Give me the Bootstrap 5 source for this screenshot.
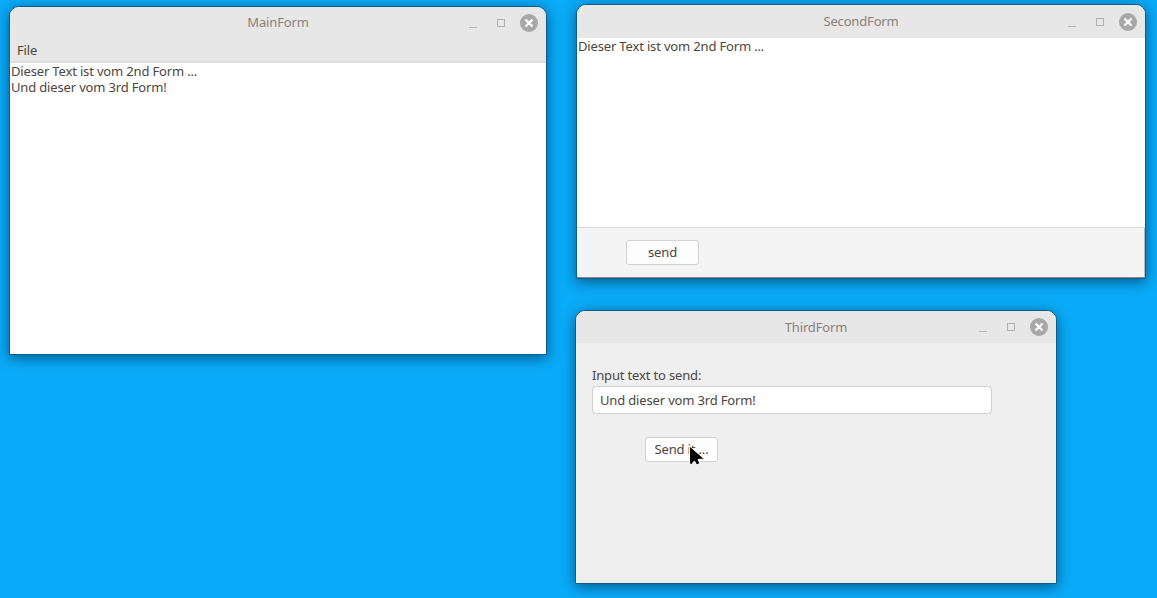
<!DOCTYPE html>
<html lang="de">
<head>
<meta charset="utf-8">
<title>Forms</title>
<link href="https://cdn.jsdelivr.net/npm/bootstrap@5.3.0/dist/css/bootstrap.min.css" rel="stylesheet">
<style>
html,body{height:100%}
body{background:#0aabf8;font-family:"Noto Sans","Open Sans",sans-serif;font-size:13px;line-height:16px;letter-spacing:-.16px;color:#4c4640;overflow:hidden;position:relative}
.desk-win{position:absolute;display:flex;flex-direction:column;border:1px solid #0a5f8c;border-top-left-radius:10px;border-top-right-radius:10px;overflow:hidden;background:#efefef;box-shadow:0 3px 14px rgba(0,35,65,.6)}
.win-main{left:9px;top:6px;width:538px;height:349px}
.win-second{left:576px;top:4px;width:570px;height:275px}
.win-third{left:575px;top:310px;width:482px;height:274px}
.title-bar{background:#e7e7e7;flex:none;position:relative;display:flex;align-items:center;justify-content:center;color:#8b8079;padding-bottom:2px}
.win-main .title-bar{height:31px}
.win-second .title-bar{height:33px}
.win-third .title-bar{height:32px;padding-bottom:0}
.win-ctrls{position:absolute;right:7px;top:0;bottom:0;display:flex;align-items:center}
.win-ctrls svg{display:block}
.menu-strip{background:#e7e7e7;flex:none;padding:4px 0 0 7px;border-bottom:2px solid #e0e0e0;height:25px}
.text-pane{background:#fff;flex:1 1 auto;padding:0 0 0 1px}
.win-second .text-pane{border-bottom:1px solid #dcdcdc}
.foot-strip{background:#f4f4f4;height:50px;flex:none;padding:12px 0 0 49px;border-right:1px solid #b8b8b8;border-bottom:1px solid #8a8a8a}
.form-pane{flex:1 1 auto;padding:24px 0 0 16px}
.plain-btn.btn{width:73px;height:25px;padding:0;font-size:13px;line-height:23px;letter-spacing:-.16px;color:#4c4640;background:#fdfdfd;border:1px solid #d2d2d2;border-radius:3px}
.text-in.form-control{width:400px;height:28px;padding:0 7px;margin-top:3px;font-size:13px;letter-spacing:-.16px;color:#4c4640;border:1px solid #cfcfcf;border-radius:4px;background:#fff}
.third-send{margin:23px 0 0 53px}
.mouse-arrow{position:absolute;left:688px;top:445px}
</style>
</head>
<body>
<div class="desk-win win-main">
  <div class="title-bar">MainForm
    <div class="win-ctrls">
      <svg width="72" height="20" viewBox="0 0 72 20"><path d="M2 14.500h8" stroke="#b5b5b5" fill="none"/><rect x="30.500" y="6.500" width="7" height="7" fill="none" stroke="#b0b0b0"/><circle cx="62" cy="10" r="9" fill="#a8a8a8"/><path d="M58.500 6.500l7 7M65.500 6.500l-7 7" stroke="#fff" stroke-width="2.200" fill="none"/></svg>
    </div>
  </div>
  <div class="menu-strip">File</div>
  <div class="text-pane">Dieser Text ist vom 2nd Form ...<br>Und dieser vom 3rd Form!</div>
</div>

<div class="desk-win win-second">
  <div class="title-bar">SecondForm
    <div class="win-ctrls">
      <svg width="72" height="20" viewBox="0 0 72 20"><path d="M2 14.500h8" stroke="#b5b5b5" fill="none"/><rect x="30.500" y="6.500" width="7" height="7" fill="none" stroke="#b0b0b0"/><circle cx="62" cy="10" r="9" fill="#a8a8a8"/><path d="M58.500 6.500l7 7M65.500 6.500l-7 7" stroke="#fff" stroke-width="2.200" fill="none"/></svg>
    </div>
  </div>
  <div class="text-pane">Dieser Text ist vom 2nd Form ...</div>
  <div class="foot-strip"><button type="button" class="btn plain-btn">send</button></div>
</div>

<div class="desk-win win-third">
  <div class="title-bar">ThirdForm
    <div class="win-ctrls">
      <svg width="72" height="20" viewBox="0 0 72 20"><path d="M2 14.500h8" stroke="#b5b5b5" fill="none"/><rect x="30.500" y="6.500" width="7" height="7" fill="none" stroke="#b0b0b0"/><circle cx="62" cy="10" r="9" fill="#a8a8a8"/><path d="M58.500 6.500l7 7M65.500 6.500l-7 7" stroke="#fff" stroke-width="2.200" fill="none"/></svg>
    </div>
  </div>
  <div class="form-pane">
    <label for="sendtext" class="d-block">Input text to send:</label>
    <input id="sendtext" type="text" class="form-control text-in" value="Und dieser vom 3rd Form!">
    <button type="button" class="btn plain-btn third-send d-block">Send it ...</button>
  </div>
</div>

<svg class="mouse-arrow" width="18" height="23" viewBox="0 0 18 23"><path d="M1.500 1v17l1.500 2 3.500-4 2 4 3.500-1.500-2-4 6.500-.5z" fill="#000" stroke="#fff" stroke-width="1" stroke-linejoin="round"/></svg>
</body>
</html>
